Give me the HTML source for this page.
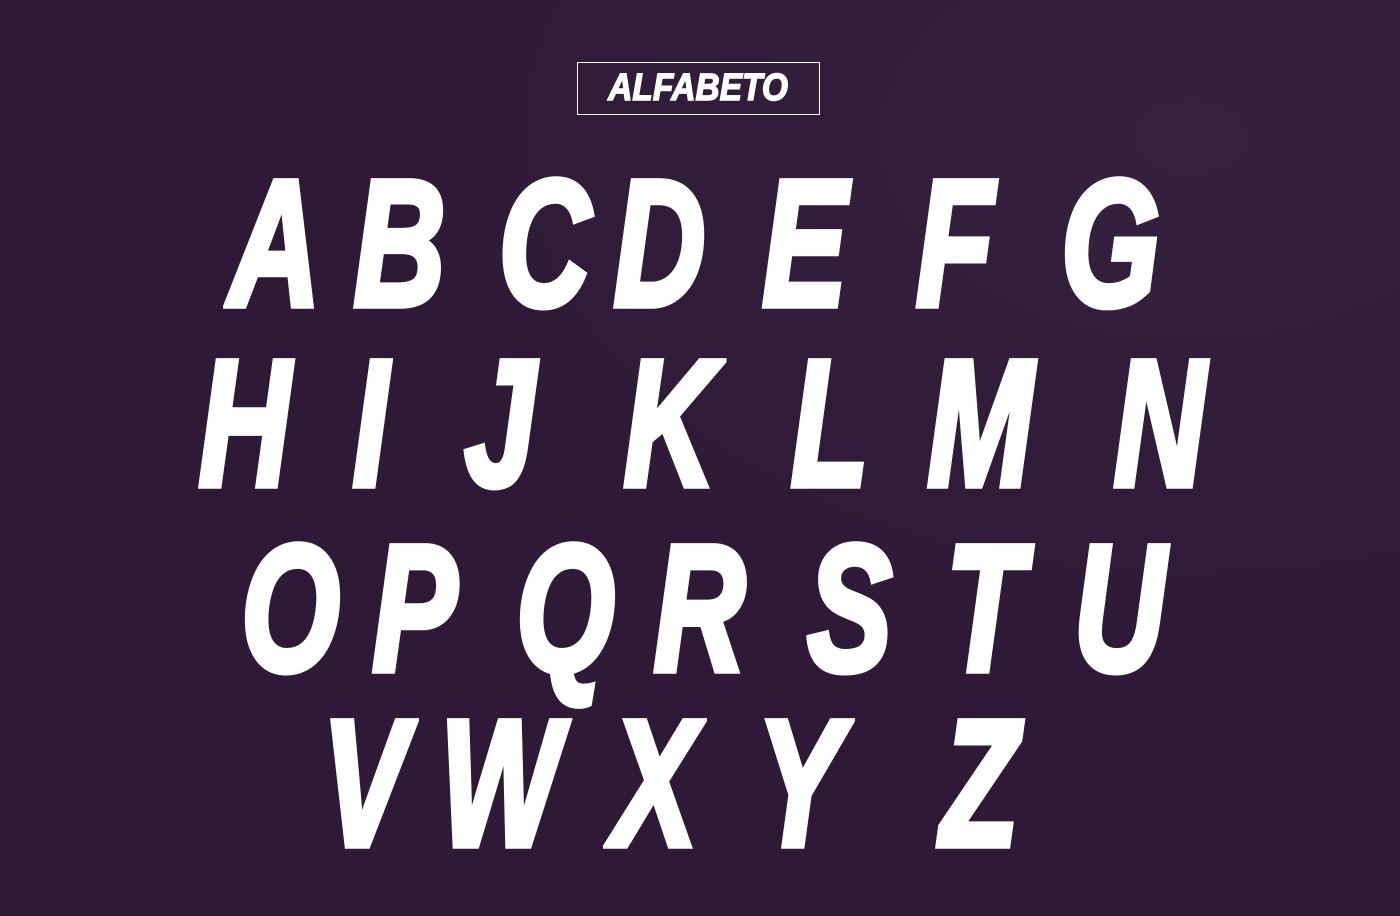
<!DOCTYPE html>
<html><head><meta charset="utf-8"><style>
html,body{margin:0;padding:0}
body{width:1400px;height:916px;overflow:hidden;position:relative;
background:#2e1a37;
background-image:radial-gradient(ellipse at 85% 15%,rgba(255,255,255,0.03),transparent 50%);
font-family:"Liberation Sans",sans-serif;}
.t{position:absolute;left:577px;top:62px;width:243px;height:53px;border:1.5px solid #fff;box-sizing:border-box;
color:#fff;font-weight:bold;font-style:italic;font-size:38px;line-height:51px;text-align:center;-webkit-text-stroke:1.5px #fff}
.t span{display:inline-block;transform:scaleX(0.88)}
.l{position:absolute;width:200px;margin-left:-100px;text-align:center;color:#fff;font-weight:bold;font-style:italic;
font-size:176px;line-height:180px;height:180px;-webkit-text-stroke:7px #fff}
.l span{display:inline-block;transform:scale(0.72,1.02)}
</style></head><body>
<div class="t"><span>ALFABETO</span></div>

<div class="l" style="left:275px;top:154px"><span>A</span></div>
<div class="l" style="left:400px;top:154px"><span>B</span></div>
<div class="l" style="left:545px;top:154px"><span>C</span></div>
<div class="l" style="left:660px;top:154px"><span>D</span></div>
<div class="l" style="left:805px;top:154px"><span>E</span></div>
<div class="l" style="left:955px;top:154px"><span>F</span></div>
<div class="l" style="left:1110px;top:154px"><span>G</span></div>

<div class="l" style="left:245px;top:334px"><span>H</span></div>
<div class="l" style="left:370px;top:334px"><span>I</span></div>
<div class="l" style="left:500px;top:334px"><span>J</span></div>
<div class="l" style="left:670px;top:334px"><span>K</span></div>
<div class="l" style="left:830px;top:334px"><span>L</span></div>
<div class="l" style="left:980px;top:334px"><span>M</span></div>
<div class="l" style="left:1160px;top:334px"><span>N</span></div>

<div class="l" style="left:290px;top:519px"><span>O</span></div>
<div class="l" style="left:415px;top:519px"><span>P</span></div>
<div class="l" style="left:565px;top:519px"><span>Q</span></div>
<div class="l" style="left:700px;top:519px"><span>R</span></div>
<div class="l" style="left:850px;top:519px"><span>S</span></div>
<div class="l" style="left:985px;top:519px"><span>T</span></div>
<div class="l" style="left:1120px;top:519px"><span>U</span></div>

<div class="l" style="left:365px;top:694px"><span>V</span></div>
<div class="l" style="left:500px;top:694px"><span>W</span></div>
<div class="l" style="left:655px;top:694px"><span>X</span></div>
<div class="l" style="left:800px;top:694px"><span>Y</span></div>
<div class="l" style="left:980px;top:694px"><span>Z</span></div>
</body></html>
